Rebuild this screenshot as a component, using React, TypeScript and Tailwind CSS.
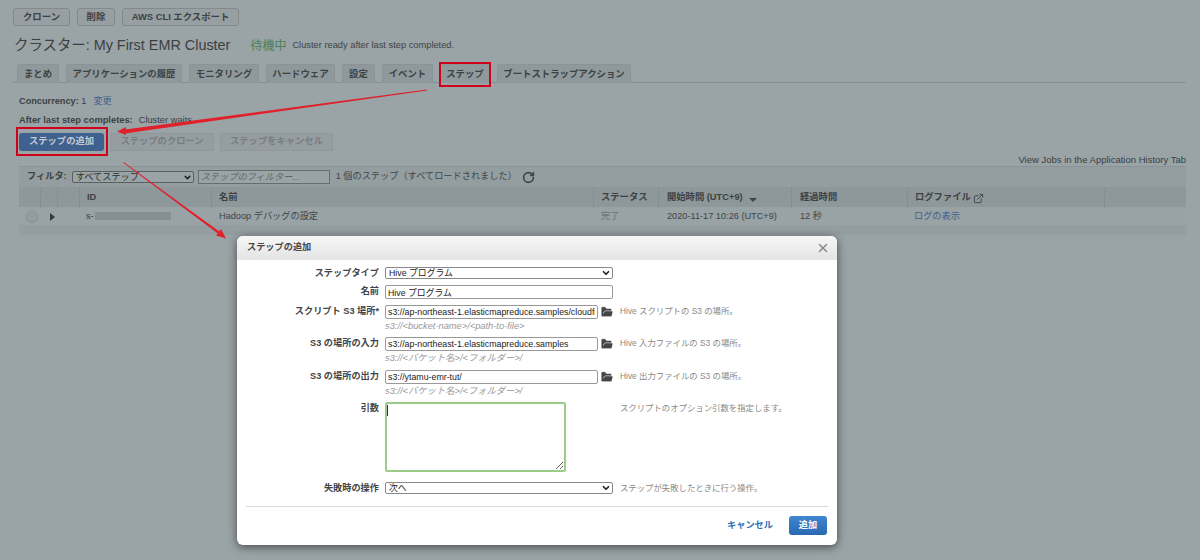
import { ChevronDown, ExternalLink, FolderOpen, RotateCw, X } from 'lucide-react';

const font = 'font-["Liberation_Sans","Noto_Sans_CJK_JP",sans-serif]';

const tabs = [
  { label: 'まとめ', width: 'w-[42px]' },
  { label: 'アプリケーションの履歴', width: 'w-[116px]' },
  { label: 'モニタリング', width: 'w-[70px]' },
  { label: 'ハードウェア', width: 'w-[69px]' },
  { label: '設定', width: 'w-[33px]' },
  { label: 'イベント', width: 'w-[51px]' },
  { label: 'ステップ', width: 'w-[50px]' },
  { label: 'ブートストラップアクション', width: 'w-[134px]' },
];

const columns = 'grid grid-cols-[22px_17px_22px_132px_382px_65px_133px_116px_197px_81px]';

function TopButton({ label, width }: { label: string; width: string }) {
  return (
    <div className={`${width} h-[18px] flex items-center justify-center rounded-[3px] border border-[#83898c] bg-[#979fa2] text-[9.4px] font-bold text-[#3c4244]`}>
      {label}
    </div>
  );
}

function Field({ label, top, children, help, hint }: { label: string; top: string; children: React.ReactNode; help?: string; hint?: string }) {
  return (
    <div className={`grid grid-cols-[142px_235px_1fr] ${top}`}>
      <div className="pr-[6px] text-right text-[9.2px] leading-[12px] font-bold text-[#444]">{label}</div>
      <div>
        {children}
        {hint && <div className="mt-[1px] h-[12px] text-[9.3px] leading-[12px] italic text-[#999]">{hint}</div>}
      </div>
      {help && <div className="text-[8.4px] leading-[12px] text-[#888]">{help}</div>}
    </div>
  );
}

function PathInput({ value }: { value: string }) {
  return (
    <div className="flex items-center">
      <input
        readOnly
        value={value}
        className="block w-[213px] h-[14px] rounded-[2px] border border-[#999] bg-white px-[2px] text-[8.8px] text-[#222] outline-none"
      />
      <FolderOpen size={14} className="ml-[2px] text-[#444]" fill="#444" stroke="#fff" strokeWidth={1} />
    </div>
  );
}

function SelectBox({ value }: { value: string }) {
  return (
    <div className="relative w-[228px] h-[12px]">
      <select className="block w-full h-[12px] appearance-none rounded-[2px] border border-[#888] bg-white pl-[3px] text-[8.8px] leading-[10px] text-[#222] outline-none">
        <option>{value}</option>
      </select>
      <ChevronDown size={10} strokeWidth={4} className="absolute right-[2px] top-[1px] text-[#222]" />
    </div>
  );
}

export default function App() {
  return (
    <div className={`${font} relative w-[1200px] h-[560px] overflow-hidden bg-[#9aa3a6] text-[#3c4244]`}>
      {/* Page behind the dialog */}
      <div className="pt-[8px] pl-[13px] flex gap-[7px]">
        <TopButton label="クローン" width="w-[57px]" />
        <TopButton label="削除" width="w-[38px]" />
        <TopButton label="AWS CLI エクスポート" width="w-[117px]" />
      </div>

      <div className="mt-[10px] ml-[14px] h-[20px] flex items-center">
        <span className="text-[14.4px] text-[#3a4042]">クラスター: My First EMR Cluster</span>
        <span className="ml-[20px] text-[12px] text-[#4c7f55]">待機中</span>
        <span className="ml-[6px] text-[9.3px] text-[#3f4547]">Cluster ready after last step completed.</span>
      </div>

      <div className="mt-[8px] mx-[13px] w-[1173px] h-[19px] pl-[4px] flex gap-[7px] border-b border-[#868e91]">
        {tabs.map(t => (
          <div
            key={t.label}
            className={`${t.width} h-[19px] flex items-center justify-center rounded-t-[2px] border border-b-0 border-[#8b9396] bg-[#8f989b] text-[9.4px] font-bold text-[#3c4244]`}
          >
            {t.label}
          </div>
        ))}
      </div>

      <div className="mt-[12px] ml-[19px] h-[12px] text-[9.2px] leading-[12px]">
        <span className="font-bold">Concurrency:</span> 1
        <span className="ml-[7px] text-[#40608c]">変更</span>
      </div>
      <div className="mt-[7px] ml-[19px] h-[12px] text-[9.3px] leading-[12px]">
        <span className="font-bold">After last step completes:</span>
        <span className="ml-[6px]">Cluster waits</span>
      </div>

      <div className="mt-[7px] ml-[19px] flex gap-[6px]">
        <div className="w-[85px] h-[18px] flex items-center justify-center rounded-[3px] bg-[#3f618f] text-[9.3px] font-bold text-[#c5ccd2]">
          ステップの追加
        </div>
        <div className="w-[104px] h-[18px] flex items-center justify-center rounded-[2px] border border-[#8f979a] bg-[#959da0] text-[9.3px] font-bold text-[#757d80]">
          ステップのクローン
        </div>
        <div className="w-[113px] h-[18px] flex items-center justify-center rounded-[2px] border border-[#8f979a] bg-[#959da0] text-[9.3px] font-bold text-[#757d80]">
          ステップをキャンセル
        </div>
      </div>

      <div className="mt-[3px] mr-[14px] h-[12px] text-right text-[9.5px] leading-[12px] text-[#3a4042]">
        View Jobs in the Application History Tab
      </div>

      <div className="ml-[19px] w-[1167px]">
        <div className="h-[21px] flex items-center border-t border-[#8b9396] bg-[#949da0] pl-[8px] text-[9.2px]">
          <span className="font-bold">フィルタ:</span>
          <div className="relative ml-[5px] w-[122px] h-[12px]">
            <select className="block w-full h-[12px] appearance-none rounded-[2px] border border-[#5a6062] bg-[#9aa3a6] pl-[3px] text-[9.2px] leading-[10px] text-[#2a2f31] outline-none">
              <option>すべてステップ</option>
            </select>
            <ChevronDown size={9} strokeWidth={4} className="absolute right-[2px] top-[2px] text-[#222]" />
          </div>
          <input
            readOnly
            placeholder="ステップのフィルター..."
            className="block ml-[4px] w-[132px] h-[14px] border border-[#666d70] bg-[#9aa3a6] px-[2px] text-[9.2px] italic placeholder:text-[#60676a] outline-none"
          />
          <span className="ml-[6px] text-[9.2px] text-[#3f4547]">1 個のステップ（すべてロードされました）</span>
          <RotateCw size={13} strokeWidth={3} className="ml-[5px] text-[#3f4547]" />
        </div>

        <div className={`${columns} h-[20px] items-center bg-[#8e979a] text-[9.3px] font-bold`}>
          <div className="h-full border-r border-[#878f92]" />
          <div className="h-full border-r border-[#878f92]" />
          <div className="h-full border-r border-[#878f92]" />
          <div className="h-full pl-[7px] leading-[21px] border-r border-[#878f92]">ID</div>
          <div className="h-full pl-[7px] leading-[21px] border-r border-[#878f92]">名前</div>
          <div className="h-full pl-[7px] leading-[21px] border-r border-[#878f92]">ステータス</div>
          <div className="h-full pl-[8px] pt-[1px] flex items-center gap-[6px] border-r border-[#878f92]">
            開始時間 (UTC+9)
            <span className="mt-[3px] w-0 h-0 border-x-[4px] border-t-[4px] border-x-transparent border-t-[#3f4547]" />
          </div>
          <div className="h-full pl-[8px] leading-[21px] border-r border-[#878f92]">経過時間</div>
          <div className="h-full pl-[7px] pt-[1px] flex items-center gap-[2px] border-r border-[#878f92]">
            ログファイル
            <ExternalLink size={11} strokeWidth={2} />
          </div>
          <div />
        </div>

        <div className={`${columns} h-[18px] pt-[1px] items-center bg-[#99a2a5] text-[9.2px] text-[#3f4547]`}>
          <div className="pl-[7px]">
            <div className="w-[12px] h-[12px] rounded-full border border-[#8a9295] bg-[#959da0]" />
          </div>
          <div className="pl-[9px]">
            <div className="w-0 h-0 border-y-[4px] border-l-[5px] border-y-transparent border-l-[#33393b]" />
          </div>
          <div />
          <div className="pl-[6px] flex items-center">
            s-
            <div className="ml-[1px] w-[76px] h-[8px] bg-[#868e91]" />
          </div>
          <div className="pl-[7px]">Hadoop デバッグの設定</div>
          <div className="pl-[7px] text-[#6a7275]">完了</div>
          <div className="pl-[8px]">2020-11-17 10:26 (UTC+9)</div>
          <div className="pl-[8px]">12 秒</div>
          <div className="pl-[6px] text-[#40608c]">ログの表示</div>
          <div />
        </div>

        <div className="h-[10px] bg-[#949da0]" />
      </div>

      {/* Red annotations */}
      <div className="absolute left-[439px] top-[62px] w-[52px] h-[25px] border-2 border-[#d0021b]" />
      <div className="absolute left-[16px] top-[127px] w-[92px] h-[29px] border-2 border-[#d0021b]" />
      <svg className="absolute left-0 top-0 pointer-events-none" width="1200" height="560">
        <polygon points="427,89.6 427,90.4 125,133.5 125,129.6" fill="#e0212a" />
        <polygon points="117,131.5 126,127 126,135" fill="#e0212a" />
        <polygon points="123,162.6 123.6,162 220,232 218.5,234" fill="#e0212a" />
        <polygon points="226,238.5 216,235.5 221,229" fill="#e0212a" />
      </svg>

      {/* Dialog */}
      <div className="absolute left-[237px] top-[236px] w-[600px] h-[309px] rounded-[6px] bg-white shadow-[0_2px_10px_rgba(0,0,0,0.55)] overflow-hidden">
        <div className="h-[24px] flex items-center justify-between pl-[10px] pr-[7px] bg-gradient-to-b from-[#f6f6f6] to-[#e4e4e4]">
          <span className="text-[9.2px] font-bold text-[#444]">ステップの追加</span>
          <X size={14} strokeWidth={2.5} className="text-[#8a8a8a]" />
        </div>

        <div className="pl-[6px]">
          <Field label="ステップタイプ" top="mt-[7px]">
            <SelectBox value="Hive プログラム" />
          </Field>
          <Field label="名前" top="mt-[6px]">
            <input
              readOnly
              value="Hive プログラム"
              className="block w-[228px] h-[14px] rounded-[2px] border border-[#999] bg-white px-[2px] text-[8.8px] text-[#222] outline-none"
            />
          </Field>
          <Field label="スクリプト S3 場所*" top="mt-[6px]" help="Hive スクリプトの S3 の場所。" hint="s3://<bucket-name>/<path-to-file>">
            <PathInput value="s3://ap-northeast-1.elasticmapreduce.samples/cloudfront/code/Hive_CloudFront.q" />
          </Field>
          <Field label="S3 の場所の入力" top="mt-[5px]" help="Hive 入力ファイルの S3 の場所。" hint="s3://<バケット名>/<フォルダー>/">
            <PathInput value="s3://ap-northeast-1.elasticmapreduce.samples" />
          </Field>
          <Field label="S3 の場所の出力" top="mt-[6px]" help="Hive 出力ファイルの S3 の場所。" hint="s3://<バケット名>/<フォルダー>/">
            <PathInput value="s3://ytamu-emr-tut/" />
          </Field>
          <Field label="引数" top="mt-[5px]" help="スクリプトのオプション引数を指定します。">
            <div className="relative h-[70px]">
              <textarea readOnly className="block w-[181px] h-[70px] rounded-[2px] border-2 border-[#9ccb8a] bg-white outline-none" />
              <div className="absolute left-[2px] top-[3px] w-px h-[11px] bg-[#333]" />
            </div>
          </Field>
          <Field label="失敗時の操作" top="mt-[10px]" help="ステップが失敗したときに行う操作。">
            <SelectBox value="次へ" />
          </Field>
        </div>

        <div className="mt-[12px] mx-[9px] border-t border-[#d8d8d8]" />

        <div className="mt-[9px] pr-[10px] flex items-center justify-end">
          <span className="text-[9.2px] font-bold text-[#2f6fb5]">キャンセル</span>
          <div className="ml-[16px] w-[38px] h-[19px] flex items-center justify-center rounded-[3px] bg-gradient-to-b from-[#3f87d0] to-[#2a68b4] text-[9.2px] font-bold text-white">
            追加
          </div>
        </div>
      </div>
    </div>
  );
}
